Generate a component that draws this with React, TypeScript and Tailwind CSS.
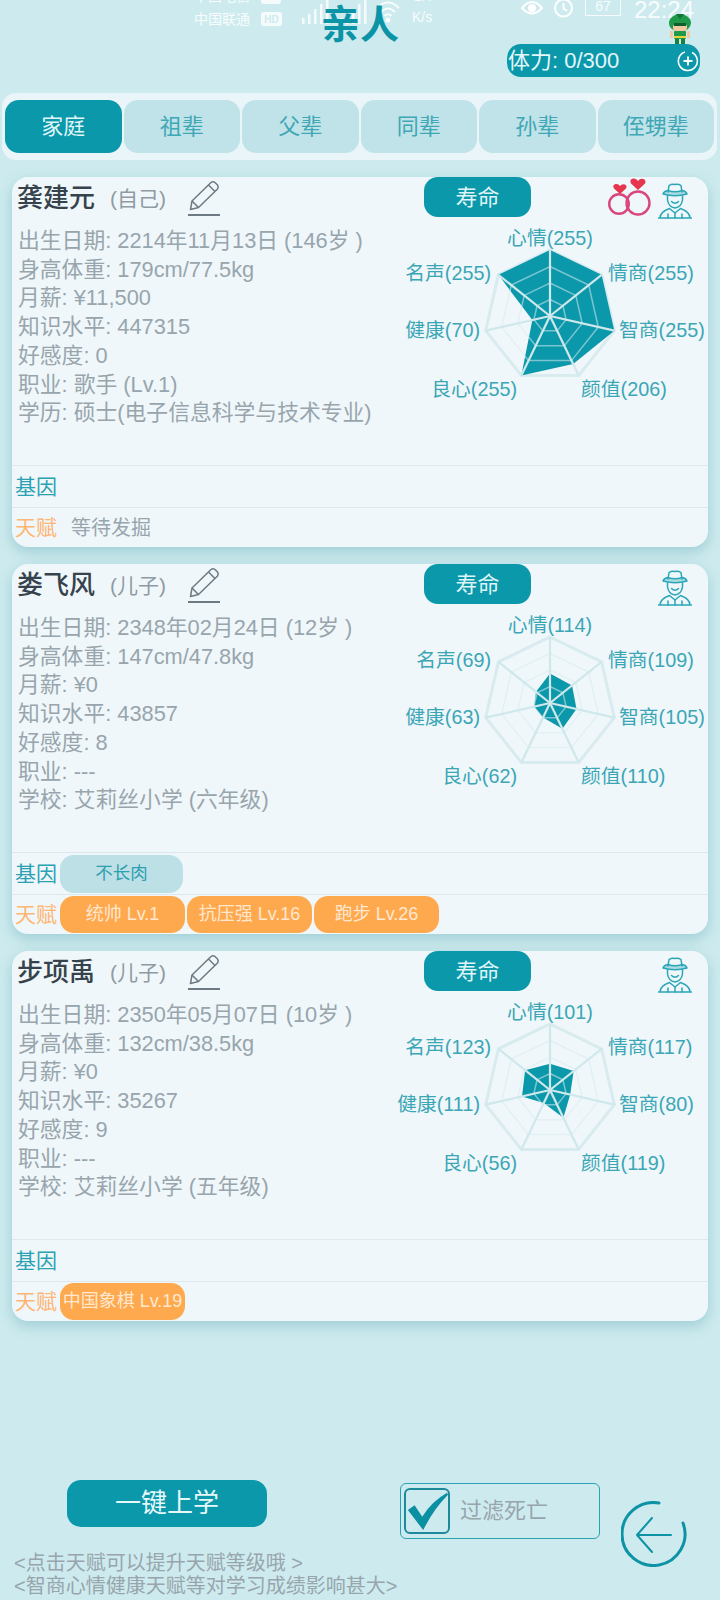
// Relatives screen: family tab with three member cards

const STAT_NAMES = ['心情', '情商', '智商', '颜值', '良心', '健康', '名声'];

const LABEL_POS = [
  'left-[162px] -translate-x-1/2 top-[9px]',
  'left-[220px] top-[44px]',
  'left-[231px] top-[101px]',
  'left-[193px] top-[160px]',
  'right-[191px] top-[160px]',
  'right-[228px] top-[101px]',
  'right-[217px] top-[44px]',
];

const CX = 162;
const CY = 99;
const RADIUS = 66;

function point(i: number, ratio: number) {
  const a = (-90 + (i * 360) / 7) * (Math.PI / 180);
  return `${CX + RADIUS * ratio * Math.cos(a)},${CY + RADIUS * ratio * Math.sin(a)}`;
}

function ring(ratio: number) {
  return STAT_NAMES.map((_, i) => point(i, ratio)).join(' ');
}

function Radar({ stats }: { stats: number[] }) {
  return (
    <div className="relative w-[320px] h-[220px] shrink-0">
      <svg width="320" height="220" className="absolute inset-0">
        <polygon points={ring(1)} fill="none" stroke="#d8ebef" strokeWidth="3" />
        <polygon points={stats.map((v, i) => point(i, Math.min(v / 255, 1))).join(' ')} fill="#0b98ab" />
        {[0.25, 0.5, 0.75].map((r) => (
          <polygon key={r} points={ring(r)} fill="none" stroke="#d8ebef" strokeOpacity="0.55" strokeWidth="1.5" />
        ))}
        {STAT_NAMES.map((n, i) => {
          const [x, y] = point(i, 1).split(',');
          return <line key={n} x1={CX} y1={CY} x2={x} y2={y} stroke="#cfe8ec" strokeWidth="2.2" />;
        })}
      </svg>
      {STAT_NAMES.map((n, i) => (
        <span key={n} className={`absolute leading-[24px] text-[19.8px] whitespace-nowrap text-[#3ba6b6] ${LABEL_POS[i]}`}>
          {n}({stats[i]})
        </span>
      ))}
    </div>
  );
}

function Pencil() {
  return (
    <svg width="34" height="36" viewBox="0 0 34 36" fill="none" stroke="#6d7a83" strokeWidth="1.5" strokeLinejoin="round">
      <path d="M5 21 L24 2.5 Q26 1 28 2.5 L30.5 5 Q32 7 30.5 9 L11.5 27.5 L3.5 29.5 Z" />
      <path d="M21.5 5 L28 11.5 M5 21 L11.5 27.5" />
      <path d="M1 35 H33" strokeWidth="2" />
    </svg>
  );
}

function Rings() {
  return (
    <svg width="43" height="38" viewBox="0 0 43 38" fill="none">
      <circle cx="11" cy="26" r="9.8" stroke="#d9467e" strokeWidth="2.4" />
      <circle cx="30" cy="25" r="11.5" stroke="#d9467e" strokeWidth="2.4" />
      <path d="M12 16 L6 10.5 Q4 7 7.5 6 Q10.5 5.5 12 8 Q14 5.5 17 6.5 Q19.5 8 18 10.5 Z" fill="#e6364f" />
      <path d="M30 12 L23 5.5 Q21 1.5 25 0.5 Q28.5 0 30 3 Q32 0 35.5 1 Q38.5 2.5 37 5.5 Z" fill="#e6364f" />
    </svg>
  );
}

function Man() {
  return (
    <svg width="34" height="36" viewBox="0 0 34 36" fill="none" stroke="#2aa6b6" strokeWidth="1.5" strokeLinecap="round" strokeLinejoin="round">
      <path d="M10 9 L11 2.5 Q14 0.5 17 1.5 Q20 0.5 23 2.5 L24 9" />
      <path d="M5 11 Q17 14.5 29 11 Q28 8 24 7.5 Q17 10 10 7.5 Q6 8 5 11 Z" fill="#2aa6b6" fillOpacity="0.35" />
      <path d="M9.5 13 V17 Q10.5 24 17 25 Q23.5 24 24.5 17 V13" />
      <path d="M13.5 18.5 Q17 22 20.5 18.5" />
      <path d="M0.5 35 H33.5 M2 35 Q2 29 11.5 25.5 L17 30 L22.5 25.5 Q32 29 32 35" />
      <path d="M17 30 V35 M10 35 V31 M24 35 V31" />
    </svg>
  );
}

type Member = {
  name: string;
  relation: string;
  married?: boolean;
  lines: string[];
  stats: number[];
  gene?: string;
  talents: string[];
  placeholder?: string;
};

const MEMBERS: Member[] = [
  {
    name: '龚建元',
    relation: '(自己)',
    married: true,
    lines: [
      '出生日期: 2214年11月13日 (146岁 )',
      '身高体重: 179cm/77.5kg',
      '月薪: ¥11,500',
      '知识水平: 447315',
      '好感度: 0',
      '职业: 歌手 (Lv.1)',
      '学历: 硕士(电子信息科学与技术专业)',
    ],
    stats: [255, 255, 255, 206, 255, 70, 255],
    talents: [],
    placeholder: '等待发掘',
  },
  {
    name: '娄飞风',
    relation: '(儿子)',
    lines: [
      '出生日期: 2348年02月24日 (12岁 )',
      '身高体重: 147cm/47.8kg',
      '月薪: ¥0',
      '知识水平: 43857',
      '好感度: 8',
      '职业: ---',
      '学校: 艾莉丝小学 (六年级)',
    ],
    stats: [114, 109, 105, 110, 62, 63, 69],
    gene: '不长肉',
    talents: ['统帅 Lv.1', '抗压强 Lv.16', '跑步 Lv.26'],
  },
  {
    name: '步项禹',
    relation: '(儿子)',
    lines: [
      '出生日期: 2350年05月07日 (10岁 )',
      '身高体重: 132cm/38.5kg',
      '月薪: ¥0',
      '知识水平: 35267',
      '好感度: 9',
      '职业: ---',
      '学校: 艾莉丝小学 (五年级)',
    ],
    stats: [101, 117, 80, 119, 56, 111, 123],
    talents: ['中国象棋 Lv.19'],
  },
];

function MemberCard({ member }: { member: Member }) {
  return (
    <div className="ml-[12px] w-[696px] h-[370px] flex flex-col rounded-[16px] bg-[#eff7fa] shadow-[0_5px_14px_rgba(40,130,150,0.28)]">
      <div className="h-[288px] flex flex-col">
        <div className="h-[40px] flex items-center">
          <div className="w-[412px] h-[40px] pl-[5px] flex items-center">
            <span className="mt-[3px] text-[26px] font-medium text-[#36424c]">{member.name}</span>
            <span className="ml-[15px] mt-[3px] text-[21px] text-[#8f9aa3]">{member.relation}</span>
            <div className="ml-[21px] mt-[2px]">
              <Pencil />
            </div>
          </div>
          <div className="w-[107px] h-[40px] flex items-center justify-center rounded-[14px] bg-[#0b98ab] text-[22px] text-[#dff5f7]">
            寿命
          </div>
          <div className="ml-auto h-[40px] pt-[1px] pr-[16px] flex items-start gap-[7px]">
            {member.married && <Rings />}
            <div className="mt-[5px]">
              <Man />
            </div>
          </div>
        </div>
        <div className="flex">
          <div className="w-[376px] pl-[6px] pt-[10px] text-[21.8px] leading-[28.7px] text-[#98a5ad] whitespace-nowrap">
            {member.lines.map((line) => (
              <div key={line}>{line}</div>
            ))}
          </div>
          <Radar stats={member.stats} />
        </div>
      </div>

      <div className="h-[42px] flex items-center pl-[3px] border-t border-[#dde9ed]">
        <span className="w-[45px] text-[21px] text-[#2ba2b3]">基因</span>
        {member.gene && (
          <span className="w-[123px] h-[38px] flex items-center justify-center rounded-[14px] bg-[#bde0e6] text-[17.5px] text-[#2d9fb0]">
            {member.gene}
          </span>
        )}
      </div>
      <div className="h-[40px] flex items-center pl-[3px] border-t border-[#dde9ed]">
        <span className="w-[45px] text-[21px] text-[#ffb573]">天赋</span>
        {member.placeholder && <span className="ml-[11px] text-[20px] text-[#98a5ad]">{member.placeholder}</span>}
        <div className="flex gap-[2px]">
          {member.talents.map((t) => (
            <span
              key={t}
              className="w-[125px] h-[37px] flex items-center justify-center rounded-[14px] bg-[#ffa94f] text-[18px] whitespace-nowrap text-[#ffe8cf]"
            >
              {t}
            </span>
          ))}
        </div>
      </div>
    </div>
  );
}

function SignalBars() {
  return (
    <svg width="30" height="24" viewBox="0 0 30 24" fill="#ffffff">
      <rect x="0" y="18" width="2.5" height="6" />
      <rect x="6" y="14" width="2.5" height="10" />
      <rect x="12" y="9" width="2.5" height="15" />
      <rect x="18" y="4" width="2.5" height="20" />
      <rect x="24" y="0" width="2.5" height="24" />
    </svg>
  );
}

// Phone status bar that sits over the page header
function StatusBar() {
  return (
    <div className="absolute inset-x-0 top-0 h-[28px] overflow-hidden text-white/85">
      <span className="absolute left-[194px] top-[-13px] text-[14px] leading-[18px]">中国电信</span>
      <span className="absolute left-[194px] top-[10px] text-[14px] leading-[18px]">中国联通</span>
      <span className="absolute left-[261px] top-[-9px] w-[20px] h-[13px] rounded-[3px] bg-white/80" />
      <span className="absolute left-[261px] top-[12px] w-[21px] h-[14px] flex items-center justify-center rounded-[3px] bg-white/80 text-[10px] font-bold text-[#cdebee]">
        HD
      </span>
      <div className="absolute left-[302px] top-0 opacity-80">
        <SignalBars />
      </div>
      <div className="absolute left-[340px] top-0 opacity-80">
        <SignalBars />
      </div>
      <svg className="absolute left-[376px] top-0" width="24" height="24" viewBox="0 0 24 24" fill="none" stroke="#ffffff" strokeWidth="2" strokeOpacity="0.85">
        <path d="M1 8 Q12 -3 23 8 M5 12 Q12 5 19 12 M8.5 16 Q12 12.5 15.5 16" />
        <circle cx="12" cy="20" r="1.5" fill="#ffffff" />
      </svg>
      <span className="absolute left-[414px] top-[-11px] text-[13px] leading-[16px]">1.4</span>
      <span className="absolute left-[412px] top-[9px] text-[14px] leading-[16px]">K/s</span>
      <svg className="absolute left-[521px] top-0" width="22" height="16" viewBox="0 0 22 16" fill="none" stroke="#ffffff" strokeWidth="2">
        <path d="M1 8 Q11 -4 21 8 Q11 19 1 8 Z" />
        <circle cx="11" cy="8" r="3" fill="#ffffff" />
      </svg>
      <svg className="absolute left-[553px] top-0" width="21" height="18" viewBox="0 0 21 18" fill="none" stroke="#ffffff" strokeWidth="2">
        <circle cx="10.5" cy="8" r="8.5" />
        <path d="M10.5 3 V8.5 L14 11" />
      </svg>
      <div className="absolute left-[585px] top-[-4px] w-[36px] h-[20px] border border-white/80 flex items-center justify-center text-[14px] leading-none">
        67
      </div>
      <span className="absolute left-[634px] top-[-2px] text-[24px] leading-[24px]">22:24</span>
    </div>
  );
}

function Sprite() {
  return (
    <svg width="26" height="30" viewBox="0 0 26 30">
      <ellipse cx="13" cy="9" rx="11" ry="9" fill="#1f9a4a" />
      <path d="M9 0 L13 5 L17 0 Z" fill="#14733a" />
      <rect x="6" y="10" width="14" height="7" rx="3" fill="#f2c9a0" />
      <rect x="7" y="9" width="12" height="3" fill="#0e5f2d" />
      <rect x="7" y="17" width="12" height="8" rx="1" fill="#1f9a4a" />
      <rect x="3" y="17" width="3" height="7" fill="#f2c9a0" />
      <rect x="20" y="17" width="3" height="7" fill="#f2c9a0" />
      <rect x="7" y="22" width="12" height="2" fill="#e8d23a" />
      <rect x="8" y="25" width="4" height="5" fill="#1c7f40" />
      <rect x="14" y="25" width="4" height="5" fill="#1c7f40" />
    </svg>
  );
}

const TABS = ['家庭', '祖辈', '父辈', '同辈', '孙辈', '侄甥辈'];

export default function App() {
  return (
    <div className="relative w-[720px] h-[1600px] overflow-hidden bg-[#cdebee] font-['Liberation_Sans','Noto_Sans_CJK_SC',sans-serif]">
      <StatusBar />

      <div className="relative flex flex-col h-[93px] pt-[6px]">
        <div className="h-[38px] text-center text-[39px] leading-[38px] font-bold text-[#0b93a6]">亲人</div>
        <div className="relative self-end mr-[20px] w-[193px] h-[33px] pl-[1px] flex items-center justify-between rounded-[14px] bg-[#0b98ab] text-[22px] text-[#e3f7f9]">
          <span>体力: 0/300</span>
          <svg className="mr-[1px]" width="22" height="22" viewBox="0 0 22 22" fill="none" stroke="#ffffff" strokeWidth="1.6">
            <path d="M15 2.5 A9.5 9.5 0 1 1 8 2" />
            <path d="M11 6.5 V15.5 M6.5 11 H15.5" strokeWidth="2" />
          </svg>
          <div className="absolute right-[7px] top-[-30px]">
            <Sprite />
          </div>
        </div>
      </div>

      <div className="ml-[2px] w-[715px] h-[67px] px-[3px] py-[7px] flex gap-[2px] rounded-[14px] bg-[#e9f5f8]">
        {TABS.map((tab, i) => (
          <div
            key={tab}
            className={`flex-1 flex items-center justify-center rounded-[14px] text-[22px] ${
              i === 0 ? 'bg-[#0b98ab] text-[#dff5f7]' : 'bg-[#bfe3e8] text-[#3fa7b6]'
            }`}
          >
            {tab}
          </div>
        ))}
      </div>

      <div className="mt-[17px] flex flex-col gap-[17px]">
        {MEMBERS.map((m) => (
          <MemberCard key={m.name} member={m} />
        ))}
      </div>

      <div className="mt-[159px] flex">
        <div className="w-[400px]">
          <div className="ml-[67px] w-[200px] h-[47px] flex items-center justify-center rounded-[14px] bg-[#0b98ab] text-[26px] text-[#e6f8fa]">
            一键上学
          </div>
          <div className="mt-[25px] pl-[14px] text-[20px] leading-[23px] text-[#98a5ad] whitespace-nowrap">
            <div>&lt;点击天赋可以提升天赋等级哦 &gt;</div>
            <div>&lt;智商心情健康天赋等对学习成绩影响甚大&gt;</div>
          </div>
        </div>
        <div className="mt-[3px] w-[200px] h-[56px] flex items-center pl-[3px] rounded-[6px] border border-[#2ba2b3]">
          <div className="w-[46px] h-[46px] flex items-center justify-center rounded-[6px] border-2 border-[#1d8a9c]">
            <svg width="44" height="42" viewBox="0 0 44 42" fill="#0b8fa3">
              <path d="M2 20 L9 15 L17 27 Q27 11 43 2 L44 4 Q29 19 18 41 Z" />
            </svg>
          </div>
          <span className="ml-[10px] mt-[-2px] text-[22px] text-[#98a5ad]">过滤死亡</span>
        </div>
        <svg className="ml-[21px] mt-[21px]" width="66" height="66" viewBox="0 0 66 66" fill="none" stroke="#0e93a6" strokeWidth="3" strokeLinecap="round" strokeLinejoin="round">
          <path d="M38 2 A31.5 31.5 0 1 0 62 22" />
          <path d="M31 17 L16 34 L31 51 M16 34 H50" strokeWidth="2" />
        </svg>
      </div>
    </div>
  );
}
